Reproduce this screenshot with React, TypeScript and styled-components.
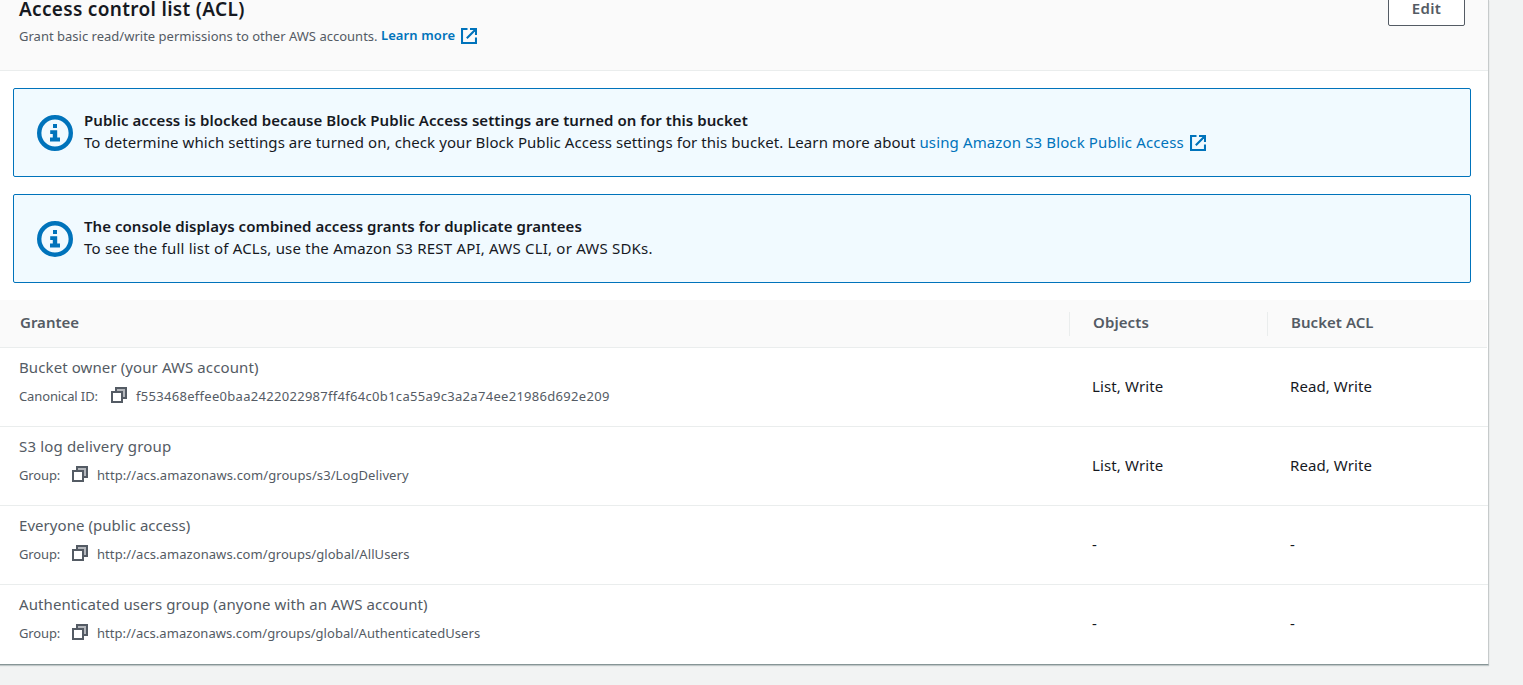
import React from 'react';
import styled, { createGlobalStyle } from 'styled-components';

const GlobalStyle = createGlobalStyle`
  * { box-sizing: border-box; }
  html, body { margin: 0; height: 685px; overflow: hidden; background: #f2f3f3; }
  body {
    font-family: 'Noto Sans', 'Open Sans', sans-serif;
    font-size: 15px;
    line-height: 22px;
    color: #16191f;
  }
`;

const Page = styled.main`
  width: 1523px;
  height: 685px;
  overflow: hidden;
`;

const Panel = styled.section`
  width: 1489px;
  height: 665px;
  background: #fff;
  border-right: 1px solid #c6cacb;
  border-bottom: 1px solid #879596;
  box-shadow: 0 1px 1px rgba(0, 28, 36, 0.2);
`;

const Header = styled.header`
  display: flex;
  justify-content: space-between;
  align-items: flex-start;
  height: 71px;
  padding: 0 23px 0 19px;
  background: #fafafa;
  border-bottom: 1px solid #eaeded;
`;

const Line = styled.span<{ $track?: number }>`
  display: block;
  white-space: nowrap;
  letter-spacing: ${(p) => p.$track ?? 0}px;
`;

const Title = styled(Line).attrs({ as: 'h2' })`
  margin: 0;
  font-size: 19px;
  line-height: 18px;
  font-weight: 600;
`;

const Description = styled.div`
  display: flex;
  margin-top: 7px;
  font-size: 13px;
  color: #545b64;
`;

const Link = styled.a<{ $strong?: boolean; $track?: number }>`
  display: block;
  margin-right: 6px;
  white-space: nowrap;
  color: #0073bb;
  font-weight: ${(p) => (p.$strong ? 600 : 400)};
  letter-spacing: ${(p) => p.$track ?? 0}px;
  line-height: ${(p) => (p.$strong ? 20 : 22)}px;
`;

const IconSlot = styled.span<{ $top?: number }>`
  display: block;
  flex: none;
  height: 16px;
  margin-top: ${(p) => p.$top ?? 0}px;
  svg { display: block; }
`;

const EditButton = styled.button`
  width: 77px;
  height: 34px;
  margin: -8px 0 0;
  padding: 0 0 2px;
  border: 1px solid #545b64;
  border-radius: 2px;
  background: #fff;
  color: #545b64;
  font: 600 15px/30px 'Noto Sans', sans-serif;
  letter-spacing: 0.4px;
`;

const Alerts = styled.div`
  display: flex;
  flex-direction: column;
  gap: 17px;
  padding: 17px 17px 17px 13px;
`;

const Alert = styled.div`
  display: flex;
  align-items: center;
  height: 89px;
  padding-left: 23px;
  border: 1px solid #0073bb;
  border-radius: 2px;
  background: #f1faff;
`;

const AlertText = styled.div`
  margin: -3px 0 0 11px;
  padding-bottom: 1px;
`;

const AlertTitle = styled(Line)`
  font-weight: 600;
`;

const AlertBody = styled.div`
  display: flex;
`;

const columns = '1069px 198px 1fr';

const TableHead = styled.div`
  display: grid;
  grid-template-columns: ${columns};
  align-items: center;
  height: 48px;
  margin-right: 1px;
  background: #fafafa;
  border-bottom: 1px solid #eaeded;
`;

const HeadCell = styled.div<{ $first?: boolean; $track?: number }>`
  height: 24px;
  padding-left: ${(p) => (p.$first ? 20 : 23)}px;
  border-left: ${(p) => (p.$first ? '0' : '1px solid #eaeded')};
  line-height: 21px;
  font-weight: 600;
  color: #545b64;
  letter-spacing: ${(p) => p.$track ?? 0}px;
`;

const Row = styled.div`
  display: grid;
  grid-template-columns: ${columns};
  height: 79px;
  border-bottom: 1px solid #eaeded;
  &:last-child { border-bottom: 0; }
`;

const Grantee = styled.div`
  padding: 8px 0 0 19px;
  color: #545b64;
`;

const Identifier = styled.div<{ $labelWidth: number }>`
  display: grid;
  grid-template-columns: ${(p) => p.$labelWidth}px 25px auto;
  justify-content: start;
  margin-top: 7px;
  font-size: 13px;
`;

const Permission = styled(Line)`
  padding: 27px 0 0 23px;
`;

const ExternalIcon = () => (
  <svg width="16" height="16" viewBox="0 0 16 16" fill="none" stroke="#0073bb" strokeWidth="2.1">
    <path d="M6.5 1H1v14h14V9.5" />
    <path d="M9 1h6v6M14.8 1.2L5.8 10.2" />
  </svg>
);

const CopyIcon = () => (
  <svg width="16" height="16" viewBox="0 0 16 16" stroke="#545b64" strokeWidth="2">
    <path d="M5 1h10v10H5z" fill="#b4b7bc" />
    <path d="M1 5h10v10H1z" fill="#fff" />
  </svg>
);

const InfoIcon = () => (
  <svg width="36" height="36" viewBox="0 0 36 36">
    <circle cx="18" cy="18" r="15.8" fill="none" stroke="#0073bb" strokeWidth="4.4" />
    <path fill="#0073bb" d="M16 9h4v4h-4zM13.2 15.3h7V22.6H23v4H13v-4h2.8v-3.5h-2.6z" />
  </svg>
);

const grantees = [
  { name: 'Bucket owner (your AWS account)', label: 'Canonical ID:', labelWidth: 92, id: 'f553468effee0baa2422022987ff4f64c0b1ca55a9c3a2a74ee21986d692e209', objects: 'List, Write', acl: 'Read, Write', nameTrack: 0.1, idTrack: 0.295 },
  { name: 'S3 log delivery group', label: 'Group:', labelWidth: 53, id: 'http://acs.amazonaws.com/groups/s3/LogDelivery', objects: 'List, Write', acl: 'Read, Write', nameTrack: 0.17, idTrack: 0.09 },
  { name: 'Everyone (public access)', label: 'Group:', labelWidth: 53, id: 'http://acs.amazonaws.com/groups/global/AllUsers', objects: '-', acl: '-', nameTrack: 0.05, idTrack: 0.07 },
  { name: 'Authenticated users group (anyone with an AWS account)', label: 'Group:', labelWidth: 53, id: 'http://acs.amazonaws.com/groups/global/AuthenticatedUsers', objects: '-', acl: '-', nameTrack: 0.09, idTrack: 0.05 },
];

export default function App() {
  return (
    <Page>
      <GlobalStyle />
      <Panel>
        <Header>
          <div>
            <Title $track={0.32}>Access control list (ACL)</Title>
            <Description>
              <Line $track={0.01}>Grant basic read/write permissions to other AWS accounts.&nbsp;</Line>
              <Link $strong $track={0.1}>Learn more</Link>
              <IconSlot $top={3}><ExternalIcon /></IconSlot>
            </Description>
          </div>
          <EditButton>Edit</EditButton>
        </Header>
        <Alerts>
          <Alert>
            <InfoIcon />
            <AlertText>
              <AlertTitle $track={0.06}>Public access is blocked because Block Public Access settings are turned on for this bucket</AlertTitle>
              <AlertBody>
                <Line $track={0.075}>To determine which settings are turned on, check your Block Public Access settings for this bucket. Learn more about&nbsp;</Line>
                <Link $track={0.13}>using Amazon S3 Block Public Access</Link>
                <IconSlot $top={4}><ExternalIcon /></IconSlot>
              </AlertBody>
            </AlertText>
          </Alert>
          <Alert>
            <InfoIcon />
            <AlertText>
              <AlertTitle $track={0.045}>The console displays combined access grants for duplicate grantees</AlertTitle>
              <Line $track={0.205}>To see the full list of ACLs, use the Amazon S3 REST API, AWS CLI, or AWS SDKs.</Line>
            </AlertText>
          </Alert>
        </Alerts>
        <TableHead>
          <HeadCell $first>Grantee</HeadCell>
          <HeadCell $track={0.1}>Objects</HeadCell>
          <HeadCell $track={0.05}>Bucket ACL</HeadCell>
        </TableHead>
        <div>
          {grantees.map((g) => (
            <Row key={g.name}>
              <Grantee>
                <Line $track={g.nameTrack}>{g.name}</Line>
                <Identifier $labelWidth={g.labelWidth}>
                  <Line $track={-0.12}>{g.label}</Line>
                  <IconSlot $top={2}><CopyIcon /></IconSlot>
                  <Line $track={g.idTrack}>{g.id}</Line>
                </Identifier>
              </Grantee>
              <Permission $track={0.12}>{g.objects}</Permission>
              <Permission $track={0.08}>{g.acl}</Permission>
            </Row>
          ))}
        </div>
      </Panel>
    </Page>
  );
}
